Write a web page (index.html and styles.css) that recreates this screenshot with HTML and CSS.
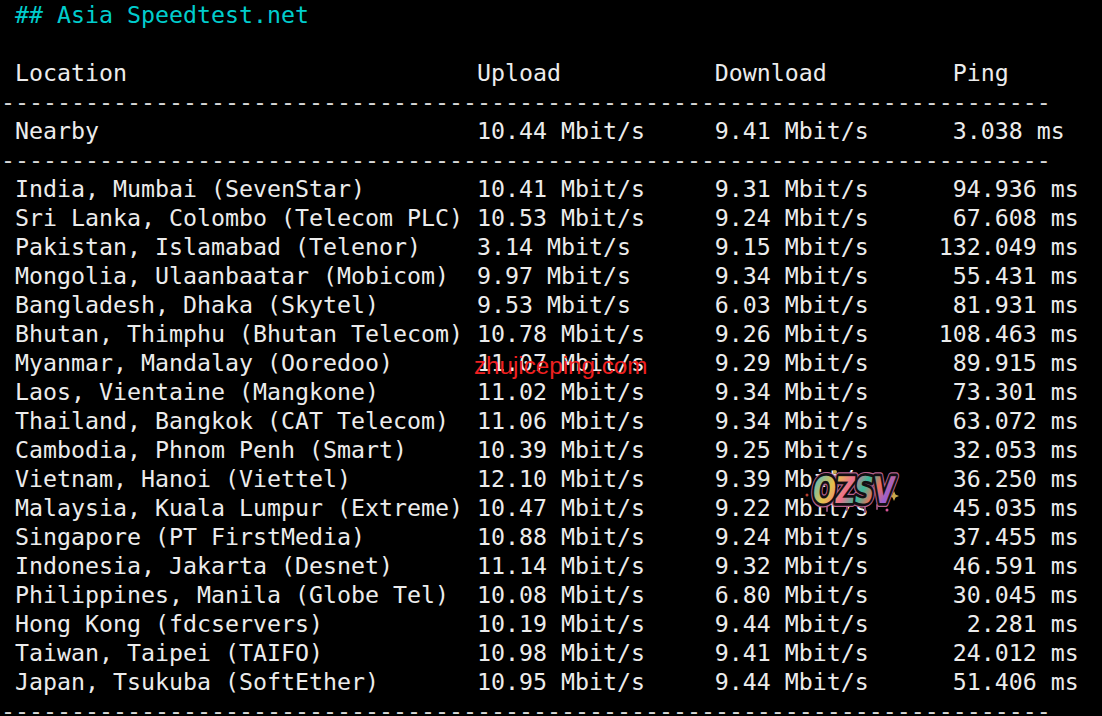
FILE: index.html
```html
<!DOCTYPE html>
<html lang="en">
<head>
<meta charset="utf-8">
<title>Asia Speedtest.net</title>
<link rel="stylesheet" href="styles.css">
</head>
<body>
<main class="term">
  <h1 class="title">## Asia Speedtest.net</h1>
  <div class="blank"></div>
  <div class="row head"><span>Location</span><span>Upload</span><span>Download</span><span class="ping-left">Ping</span></div>
  <div class="rule">---------------------------------------------------------------------------</div>
  <div class="row"><span>Nearby</span><span>10.44 Mbit/s</span><span>9.41 Mbit/s</span><span class="ping-left">3.038 ms</span></div>
  <div class="rule">---------------------------------------------------------------------------</div>
  <div class="row"><span>India, Mumbai (SevenStar)</span><span>10.41 Mbit/s</span><span>9.31 Mbit/s</span><span class="ping">94.936 ms</span></div>
  <div class="row"><span>Sri Lanka, Colombo (Telecom PLC)</span><span>10.53 Mbit/s</span><span>9.24 Mbit/s</span><span class="ping">67.608 ms</span></div>
  <div class="row"><span>Pakistan, Islamabad (Telenor)</span><span>3.14 Mbit/s</span><span>9.15 Mbit/s</span><span class="ping">132.049 ms</span></div>
  <div class="row"><span>Mongolia, Ulaanbaatar (Mobicom)</span><span>9.97 Mbit/s</span><span>9.34 Mbit/s</span><span class="ping">55.431 ms</span></div>
  <div class="row"><span>Bangladesh, Dhaka (Skytel)</span><span>9.53 Mbit/s</span><span>6.03 Mbit/s</span><span class="ping">81.931 ms</span></div>
  <div class="row"><span>Bhutan, Thimphu (Bhutan Telecom)</span><span>10.78 Mbit/s</span><span>9.26 Mbit/s</span><span class="ping">108.463 ms</span></div>
  <div class="row"><span>Myanmar, Mandalay (Ooredoo)</span><span>11.07 Mbit/s</span><span>9.29 Mbit/s</span><span class="ping">89.915 ms</span></div>
  <div class="row"><span>Laos, Vientaine (Mangkone)</span><span>11.02 Mbit/s</span><span>9.34 Mbit/s</span><span class="ping">73.301 ms</span></div>
  <div class="row"><span>Thailand, Bangkok (CAT Telecom)</span><span>11.06 Mbit/s</span><span>9.34 Mbit/s</span><span class="ping">63.072 ms</span></div>
  <div class="row"><span>Cambodia, Phnom Penh (Smart)</span><span>10.39 Mbit/s</span><span>9.25 Mbit/s</span><span class="ping">32.053 ms</span></div>
  <div class="row"><span>Vietnam, Hanoi (Viettel)</span><span>12.10 Mbit/s</span><span>9.39 Mbit/s</span><span class="ping">36.250 ms</span></div>
  <div class="row"><span>Malaysia, Kuala Lumpur (Extreme)</span><span>10.47 Mbit/s</span><span>9.22 Mbit/s</span><span class="ping">45.035 ms</span></div>
  <div class="row"><span>Singapore (PT FirstMedia)</span><span>10.88 Mbit/s</span><span>9.24 Mbit/s</span><span class="ping">37.455 ms</span></div>
  <div class="row"><span>Indonesia, Jakarta (Desnet)</span><span>11.14 Mbit/s</span><span>9.32 Mbit/s</span><span class="ping">46.591 ms</span></div>
  <div class="row"><span>Philippines, Manila (Globe Tel)</span><span>10.08 Mbit/s</span><span>6.80 Mbit/s</span><span class="ping">30.045 ms</span></div>
  <div class="row"><span>Hong Kong (fdcservers)</span><span>10.19 Mbit/s</span><span>9.44 Mbit/s</span><span class="ping">2.281 ms</span></div>
  <div class="row"><span>Taiwan, Taipei (TAIFO)</span><span>10.98 Mbit/s</span><span>9.41 Mbit/s</span><span class="ping">24.012 ms</span></div>
  <div class="row"><span>Japan, Tsukuba (SoftEther)</span><span>10.95 Mbit/s</span><span>9.44 Mbit/s</span><span class="ping">51.406 ms</span></div>
  <div class="rule">---------------------------------------------------------------------------</div>
</main>
<div class="mark">zhujiceping.com</div>
<svg class="logo" viewBox="0 0 100 50" width="100" height="50" aria-label="OZSV">
  <defs>
    <linearGradient id="paint" x1="0" y1="0" x2="1" y2="0.25">
      <stop offset="0" stop-color="#39b6d6"/>
      <stop offset="0.3" stop-color="#e6c24a"/>
      <stop offset="0.5" stop-color="#ee6f8d"/>
      <stop offset="0.68" stop-color="#39b89a"/>
      <stop offset="0.85" stop-color="#ef6f5a"/>
      <stop offset="1" stop-color="#9a5fd0"/>
    </linearGradient>
  </defs>
  <circle cx="30" cy="5" r="2" fill="#c9a84a"/>
  <circle cx="2" cy="28" r="1.500" fill="#b5402f"/>
  <circle cx="82" cy="43" r="1.500" fill="#d8559a"/>
  <path d="M89 24l1.500 3.500 3.500 1.500-3.500 1.500-1.500 3.500-1.500-3.500-3.500-1.500 3.500-1.500z" fill="#c9a84a"/>
  <path d="M22 38v6M42 38v5M60 38v7M72 38v4" class="logo-drip"/>
  <g transform="translate(47 36) skewX(-6) scale(0.92 1.22)">
    <text class="logo-text logo-halo" text-anchor="middle">OZSV</text>
    <text class="logo-text logo-line" text-anchor="middle">OZSV</text>
    <text class="logo-text logo-fill" text-anchor="middle">OZSV</text>
  </g>
</svg>
</body>
</html>
```
FILE: styles.css
```css
* {
  box-sizing: border-box;
}

html,
body {
  margin: 0;
  height: 100%;
  background: #000;
  overflow: hidden;
}

.term {
  padding: 0 0 0 1px;
  font-family: "DejaVu Sans Mono", monospace;
  font-size: 23.25px;
  line-height: 29px;
  color: #ececec;
}

.title {
  margin: 0;
  font: inherit;
  color: #00cdcd;
  padding-left: 1ch;
}

.blank {
  height: 29px;
}

.row {
  display: grid;
  grid-template-columns: 33ch 17ch 16ch 10ch;
  padding-left: 1ch;
  white-space: pre;
}

.rule {
  color: #d8d8d8;
  white-space: pre;
}

.ping {
  text-align: right;
}

.ping-left {
  padding-left: 1ch;
}

.mark {
  position: absolute;
  left: 474px;
  top: 352px;
  font-family: "Liberation Sans", sans-serif;
  font-size: 24.2px;
  line-height: 28px;
  color: #f02020;
}

.logo {
  position: absolute;
  left: 805px;
  top: 467px;
}

.logo-text {
  font-family: "DejaVu Sans", sans-serif;
  font-weight: 700;
  font-size: 30px;
  letter-spacing: -1px;
}

.logo-drip {
  fill: none;
  stroke: #8a4a70;
  stroke-width: 2px;
  stroke-linecap: round;
}

.logo-halo {
  fill: none;
  stroke: #b8648f;
  stroke-width: 6.500px;
  stroke-linejoin: round;
}

.logo-line {
  fill: none;
  stroke: #120e12;
  stroke-width: 4.500px;
  stroke-linejoin: round;
}

.logo-fill {
  fill: url(#paint);
}
```
